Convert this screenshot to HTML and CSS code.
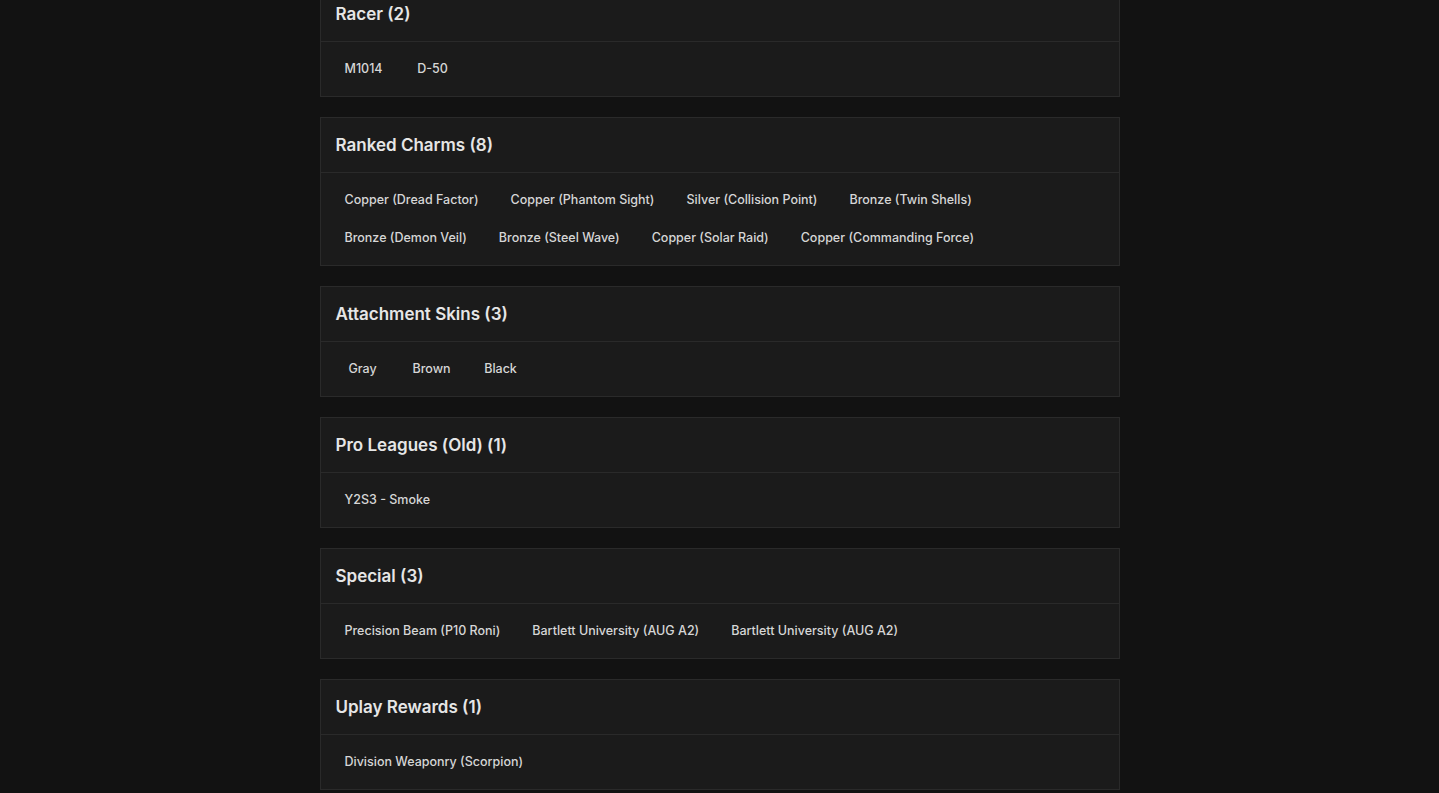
FILE: index.html
```html
<!DOCTYPE html>
<html lang="en">
<head>
<meta charset="utf-8">
<title>Items</title>
<link rel="stylesheet" href="styles.css">
</head>
<body>
<main class="list">
  <section class="card">
    <header class="card-head">Racer (2)</header>
    <div class="card-body">
      <div class="row">
        <span class="item">M1014</span>
        <span class="item">D-50</span>
      </div>
    </div>
  </section>
  <section class="card">
    <header class="card-head">Ranked Charms (8)</header>
    <div class="card-body">
      <div class="row">
        <span class="item">Copper (Dread Factor)</span>
        <span class="item">Copper (Phantom Sight)</span>
        <span class="item">Silver (Collision Point)</span>
        <span class="item">Bronze (Twin Shells)</span>
      </div>
      <div class="row">
        <span class="item">Bronze (Demon Veil)</span>
        <span class="item">Bronze (Steel Wave)</span>
        <span class="item">Copper (Solar Raid)</span>
        <span class="item">Copper (Commanding Force)</span>
      </div>
    </div>
  </section>
  <section class="card">
    <header class="card-head">Attachment Skins (3)</header>
    <div class="card-body">
      <div class="row">
        <span class="item">Gray</span>
        <span class="item">Brown</span>
        <span class="item">Black</span>
      </div>
    </div>
  </section>
  <section class="card">
    <header class="card-head">Pro Leagues (Old) (1)</header>
    <div class="card-body">
      <div class="row">
        <span class="item">Y2S3 - Smoke</span>
      </div>
    </div>
  </section>
  <section class="card">
    <header class="card-head">Special (3)</header>
    <div class="card-body">
      <div class="row">
        <span class="item">Precision Beam (P10 Roni)</span>
        <span class="item">Bartlett University (AUG A2)</span>
        <span class="item">Bartlett University (AUG A2)</span>
      </div>
    </div>
  </section>
  <section class="card">
    <header class="card-head">Uplay Rewards (1)</header>
    <div class="card-body">
      <div class="row">
        <span class="item">Division Weaponry (Scorpion)</span>
      </div>
    </div>
  </section>
</main>
</body>
</html>
```

FILE: styles.css
```css
* { box-sizing: border-box; }
html, body {
  margin: 0;
  padding: 0;
  background: #121212;
  font-family: "Inter", "Open Sans", sans-serif;
  color: #e2e2e2;
  overflow: hidden;
}
.list {
  width: 800px;
  margin: -14px auto 0;
  display: flex;
  flex-direction: column;
  gap: 20px;
}
.card {
  background: #1b1b1b;
  border: 1px solid #2a2a2a;
}
.card-head {
  height: 55px;
  padding: 0 15px 1px;
  display: flex;
  align-items: center;
  font-size: 17px;
  font-weight: 600;
  color: #e6e6e6;
  border-bottom: 1px solid #2a2a2a;
}
.card-body {
  padding: 12px 16px;
  display: flex;
  flex-direction: column;
  gap: 8px;
}
.row {
  display: flex;
  flex-wrap: wrap;
  column-gap: 16px;
}
.item {
  height: 30px;
  min-width: 52px;
  padding: 0 8px 2px;
  display: flex;
  align-items: center;
  justify-content: center;
  font-size: 12.5px;
  font-weight: 500;
  color: #d6d6d6;
}
```
